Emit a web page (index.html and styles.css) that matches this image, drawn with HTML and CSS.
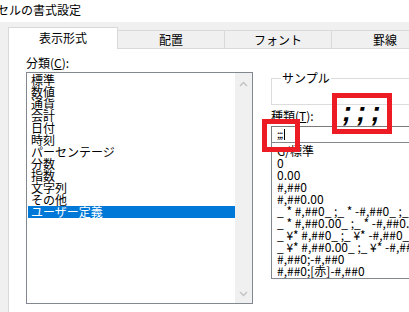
FILE: index.html
```html
<!DOCTYPE html>
<html lang="ja">
<head>
    <meta charset="UTF-8">
    <title>セルの書式設定</title>
    <link rel="stylesheet" href="styles.css">
</head>
<body>
    <div class="titlebar">セルの書式設定</div>

    <div class="dialog">
        <div class="tabs">
            <div class="tab active">表示形式</div>
            <div class="tab">配置</div>
            <div class="tab">フォント</div>
            <div class="tab">罫線</div>
        </div>

        <div class="panel">
            <div class="category">
                <div class="label">分類(<u>C</u>):</div>
                <div class="listbox">
                    <ul class="items">
                        <li>標準</li>
                        <li>数値</li>
                        <li>通貨</li>
                        <li>会計</li>
                        <li>日付</li>
                        <li>時刻</li>
                        <li>パーセンテージ</li>
                        <li>分数</li>
                        <li>指数</li>
                        <li>文字列</li>
                        <li>その他</li>
                        <li class="selected">ユーザー定義</li>
                    </ul>
                    <div class="scrollbar">
                        <svg width="9" height="6" viewBox="0 0 9 6"><polyline points="1,5 4.5,1.5 8,5" fill="none" stroke="#c2c2c2" stroke-width="1.4"/></svg>
                        <svg width="9" height="6" viewBox="0 0 9 6"><polyline points="1,1 4.5,4.5 8,1" fill="none" stroke="#c2c2c2" stroke-width="1.4"/></svg>
                    </div>
                </div>
            </div>

            <div class="format">
                <fieldset class="sample">
                    <legend>サンプル</legend>
                    <div class="sample-area"></div>
                </fieldset>
                <div class="label label-type">種類(<u>T</u>):</div>
                <div class="code-input">;;;<span class="caret"></span></div>
                <ul class="code-list">
                    <li>G/標準</li>
                    <li>0</li>
                    <li>0.00</li>
                    <li>#,##0</li>
                    <li>#,##0.00</li>
                    <li>_ * #,##0_ ;_ * -#,##0_ ;_ * "-"_ ;_ @_ </li>
                    <li>_ * #,##0.00_ ;_ * -#,##0.00_ ;_ * "-"??_ ;_ @_ </li>
                    <li>_ ¥* #,##0_ ;_ ¥* -#,##0_ ;_ ¥* "-"_ ;_ @_ </li>
                    <li>_ ¥* #,##0.00_ ;_ ¥* -#,##0.00_ ;_ ¥* "-"??_ ;_ @_ </li>
                    <li>#,##0;-#,##0</li>
                    <li>#,##0;[赤]-#,##0</li>
                </ul>
            </div>
        </div>
    </div>

    <div class="mark mark-input"></div>
    <div class="mark mark-sample">;;;</div>
</body>
</html>
```

FILE: styles.css
```css
* {
    margin: 0;
    padding: 0;
    box-sizing: border-box;
}

body {
    font-family: "Noto Sans CJK JP", sans-serif;
    font-size: 12px;
    color: #000;
    background: #fff;
    width: 409px;
    height: 312px;
    overflow: hidden;
    position: relative;
}

.titlebar {
    height: 22px;
    line-height: 20px;
    margin-left: -3px;
    white-space: nowrap;
}

.dialog {
    background: #f0f0f0;
    padding: 6px 0 0 8px;
    height: 290px;
    width: 700px;
}

.tabs {
    display: flex;
    align-items: flex-end;
    border-bottom: 1px solid #d9d9d9;
    height: 21px;
}

.tab {
    width: 107px;
    height: 18px;
    line-height: 17px;
    text-align: center;
    border-top: 1px solid #d9d9d9;
    border-right: 1px solid #d9d9d9;
    background: #f0f0f0;
}

.tab.active {
    width: 110px;
    height: 22px;
    line-height: 19px;
    margin-bottom: -1px;
    background: #fff;
    border-left: 1px solid #d9d9d9;
}

.panel {
    display: flex;
    background: #fff;
    border-left: 1px solid #d9d9d9;
    height: 270px;
    padding: 8px 0 0 17px;
}

.label {
    line-height: 12px;
    height: 12px;
    margin-bottom: 3px;
}

.listbox {
    display: flex;
    width: 227px;
    height: 232px;
    border: 1px solid #828790;
}

.items {
    list-style: none;
    flex: 1;
    padding: 1px 0 0 1px;
}

.items li {
    height: 12px;
    line-height: 12px;
    padding-left: 3px;
    white-space: nowrap;
}

.items li.selected {
    background: #0078d7;
    color: #fff;
}

.scrollbar {
    width: 17px;
    background: #f0f0f0;
    display: flex;
    flex-direction: column;
    justify-content: space-between;
    align-items: center;
    padding: 8px 0 6px;
}

.format {
    margin-left: 18px;
    width: 200px;
}

.sample {
    border: 1px solid #dcdcdc;
    margin-top: 15px;
    padding: 0 0 0 9px;
}

.sample legend {
    line-height: 12px;
    padding: 0 1px;
}

.sample-area {
    height: 20px;
}

.label-type {
    margin-top: 5px;
    margin-bottom: 4px;
}

.code-input {
    height: 16px;
    border: 1px solid #7a7a7a;
    border-bottom: none;
    padding: 1px 0 0 5px;
    line-height: 12px;
    font-size: 10px;
    letter-spacing: -1px;
}

.caret {
    display: inline-block;
    width: 1px;
    height: 11px;
    margin-left: 2px;
    background: #000;
    vertical-align: -2px;
}

.code-list {
    list-style: none;
    height: 137px;
    border: 1px solid #828790;
    padding: 2px 0 0 5px;
    overflow: hidden;
}

.code-list li {
    height: 12px;
    line-height: 12px;
    white-space: nowrap;
}

.mark {
    position: absolute;
    border: 5px solid #ed1c24;
}

.mark-input {
    left: 262px;
    top: 119px;
    width: 38px;
    height: 33px;
}

.mark-sample {
    left: 332px;
    top: 93px;
    width: 60px;
    height: 41px;
    font-family: "Liberation Sans", sans-serif;
    font-weight: bold;
    font-style: italic;
    font-size: 28px;
    line-height: 28px;
    letter-spacing: 5px;
    text-align: center;
    padding-left: 4px;
}
```
